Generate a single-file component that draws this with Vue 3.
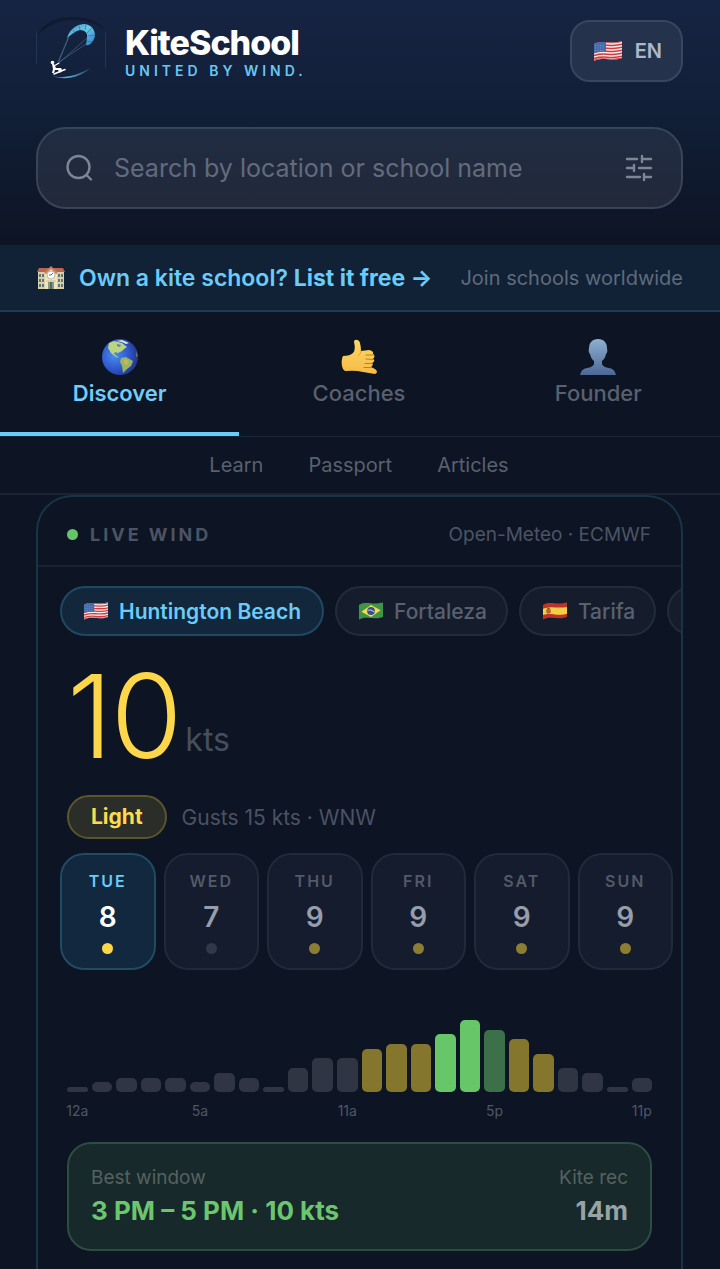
<template>
    <svg class="defs" aria-hidden="true">
        <defs>
            <clipPath id="wave">
                <path d="M1 4C10 -1 17 5 29 1V18C18 22 11 16 1 21Z" />
            </clipPath>
        </defs>
        <symbol id="flag-us" viewBox="0 0 30 22">
            <g clip-path="url(#wave)">
                <rect width="30" height="22" fill="#f4eeee" />
                <g fill="none" stroke="#cf3c40" stroke-width="1.5">
                    <path d="M0 4C10 -1 17 5 30 1" />
                    <path d="M0 7C10 2 17 8 30 4" />
                    <path d="M0 10C10 5 17 11 30 7" />
                    <path d="M0 13C10 8 17 14 30 10" />
                    <path d="M0 16C10 11 17 17 30 13" />
                    <path d="M0 19C10 14 17 20 30 16" />
                    <path d="M0 21C10 16 17 22 30 18" />
                </g>
                <path d="M0 0H13V12C9 11 4 12 0 14Z" fill="#466cac" />
                <path d="M2 5.5H12M2 8H12M2 10.5H12" stroke="#7f9ccc" stroke-width="0.8" stroke-dasharray="1 1.5" />
            </g>
        </symbol>
        <symbol id="flag-br" viewBox="0 0 30 22">
            <g clip-path="url(#wave)">
                <rect width="30" height="22" fill="#3f9447" />
                <path d="M4 12L15 4L26 10L15 18Z" fill="#f5dc4c" />
                <circle cx="15" cy="11" r="4.5" fill="#34508f" />
                <path d="M11 10Q15 9 19 12" fill="none" stroke="#dce5ef" stroke-width="1" />
            </g>
        </symbol>
        <symbol id="flag-es" viewBox="0 0 30 22">
            <g clip-path="url(#wave)">
                <rect width="30" height="22" fill="#bb3428" />
                <path d="M0 9C10 4 17 9 30 6V14C18 18 11 12 0 16Z" fill="#f6cd45" />
                <path d="M5 9H10V13Q7.5 15 5 13Z" fill="#b0652f" />
                <path d="M6 7H9V9H6Z" fill="#9a4a28" />
            </g>
        </symbol>
    </svg>

    <div class="page">
        <header class="header">
            <div class="top-row">
                <a href="#" class="brand">
                    <svg class="logo" viewBox="0 0 70 64" aria-hidden="true">
                        <defs>
                            <linearGradient id="kite" x1="0" y1="0" x2="1" y2="1">
                                <stop offset="0" stop-color="#2f8fc4" />
                                <stop offset="0.45" stop-color="#6bc9e6" />
                                <stop offset="1" stop-color="#2f7fd0" />
                            </linearGradient>
                            <linearGradient id="sea" x1="0" x2="1">
                                <stop offset="0" stop-color="#54b9de" stop-opacity="0.1" />
                                <stop offset="0.4" stop-color="#54b9de" />
                                <stop offset="1" stop-color="#54b9de" stop-opacity="0.2" />
                            </linearGradient>
                        </defs>
                        <path d="M1 19Q12 1 35 1T69 13Q54 3 35 4T1 19Z" fill="#101a31" />
                        <path d="M0.5 16V48M69.5 16V52" stroke="#223554" stroke-width="1" />
                        <path d="M32 22L22 46M52 21L24 46M33 21L23 45M50 28L23 46" stroke="#5680a0" stroke-width="0.5" />
                        <path d="M31 22C34 12 42 8 49 8C57 9 61 17 58 23C56 27 53 30 50 29L51 22C52 17 49 14 44 14C39 15 36 18 31 22Z" fill="url(#kite)" />
                        <path d="M37 14L39 17M43 10L44 14M50 8L49 14M56 12L51 17M59 19L52 20M56 26L51 25" stroke="#22649c" stroke-width="0.6" />
                        <circle cx="16.5" cy="46.5" r="1.8" fill="#fff" />
                        <path d="M16 48L18 48L20 52L25 52L26 54L24 57L22 54L19 54L18 57L16 57L17 53Z" fill="#fff" />
                        <path d="M18 50L23 47" stroke="#fff" stroke-width="1.2" stroke-linecap="round" />
                        <path d="M18 58L29 53.5" stroke="#fff" stroke-width="1.6" stroke-linecap="round" />
                        <path d="M14 59C28 64 41 59 55 52C44 61 28 66 14 59Z" fill="url(#sea)" />
                    </svg>
                    <span class="brand-text">
                        <strong>KiteSchool</strong>
                        <small>UNITED BY WIND.</small>
                    </span>
                </a>
                <button class="lang" aria-label="Language: EN">
                    <svg class="flag-lg" aria-hidden="true"><use href="#flag-us" /></svg>
                    EN
                </button>
            </div>

            <div class="search">
                <svg class="search-icon" viewBox="0 0 28 28" aria-hidden="true">
                    <circle cx="12.5" cy="13" r="11" />
                    <path d="M20.5 21L25 25.5" />
                </svg>
                <input v-model="query" type="text" aria-label="Search" placeholder="Search by location or school name" />
                <button class="filter" aria-label="Filters">
                    <svg viewBox="0 0 28 28" aria-hidden="true">
                        <path d="M2 5H12M17 5H26M17 2V8M2 14H8M14 14H26M9 11V17M2 23H15M19 23H26M19 20V26" />
                    </svg>
                </button>
            </div>
        </header>

        <div class="banner">
            <svg class="school" viewBox="0 0 28 24" aria-hidden="true">
                <path d="M1 5H27V23H1Z" fill="#d8d1a8" />
                <path d="M0 6L2 2H26L28 6Z" fill="#b9674f" />
                <path d="M8 7L14 1L20 7V23H8Z" fill="#ebe5c3" />
                <path d="M7 7L14 0L21 7L19 8L14 3L9 8Z" fill="#cf8068" />
                <circle cx="14" cy="9" r="4" fill="#fff" stroke="#a59d7d" stroke-width="0.7" />
                <path d="M14 9L16 7M14 9H12" stroke="#444" stroke-width="0.8" />
                <path d="M3 8V21M6 8V21M22 8V21M25 8V21" stroke="#566d76" stroke-width="1.8" stroke-dasharray="3 2" />
                <path d="M11 16H17V23H11Z" fill="#506c64" />
                <path d="M9 15H19M12 15V23M16 15V23" stroke="#c9c39a" stroke-width="1" />
            </svg>
            <a href="#" class="banner-link">Own a kite school? <b>List it free →</b></a>
            <span class="banner-note">Join schools worldwide</span>
        </div>

        <nav class="tabs">
            <button
                v-for="tab in tabs"
                :key="tab"
                :class="['tab', { active: tab === activeTab }]"
                @click="activeTab = tab"
            >
                <svg v-if="tab === 'Discover'" viewBox="0 0 36 36" aria-hidden="true">
                    <defs>
                        <radialGradient id="ocean" cx="0.35" cy="0.45" r="0.65">
                            <stop offset="0" stop-color="#4a8df0" />
                            <stop offset="0.6" stop-color="#2f58cc" />
                            <stop offset="1" stop-color="#25348c" />
                        </radialGradient>
                    </defs>
                    <circle cx="18" cy="18" r="18" fill="url(#ocean)" />
                    <path d="M7 4L12 2L20 4L25 8L22 10L20 12L16 14L13 13L12 15L17 19L14 18L9 14L6 9Z" fill="#bcd47c" />
                    <path d="M14 2L20 1L27 4L24 5L20 3Z" fill="#dbe8dc" />
                    <path d="M15 5L19 6L18 8L15 7Z" fill="#4a82d8" />
                    <path d="M19 19L24 18L31 22L29 27L25 30L21 34L20 27L18 23Z" fill="#9bb35d" />
                    <path d="M22 20L27 22L25 26L22 25Z" fill="#c2b766" />
                    <path d="M34 12L36 17L34 18Z" fill="#567b69" />
                </svg>
                <svg v-else-if="tab === 'Coaches'" viewBox="0 0 36 36" aria-hidden="true">
                    <defs>
                        <linearGradient id="skin" x1="0" y1="0" x2="0" y2="1">
                            <stop offset="0" stop-color="#ffd762" />
                            <stop offset="1" stop-color="#f5bb48" />
                        </linearGradient>
                    </defs>
                    <path d="M13 3C13 0 18 0 19 4Q20 8 20 12L28 11Q33 12 32 15Q35 17 32 20Q35 22 31 24Q33 26 30 28L34 30Q38 33 34 35L22 33Q14 31 5 32Q2 32 1 27Q0 20 2 17Q9 17 12 14Q15 11 13 3Z" fill="url(#skin)" />
                    <path d="M25 16L32 16M25 20L32 20.5M24 24.5L31 24.5M23 28.5L30 28.5" fill="none" stroke="#b98028" stroke-width="1.2" stroke-linecap="round" />
                    <path d="M20 12Q20 15 17 17" fill="none" stroke="#e0a53c" stroke-width="1" />
                </svg>
                <svg v-else viewBox="0 0 36 36" aria-hidden="true">
                    <defs>
                        <linearGradient id="bust" x1="0" y1="0" x2="0" y2="1">
                            <stop offset="0" stop-color="#8eb0cf" />
                            <stop offset="1" stop-color="#4d6796" />
                        </linearGradient>
                    </defs>
                    <path d="M18 0C24 0 27 4 27 9Q28 13 26 15Q25 20 22 22V25Q23 28 29 29Q35 30 36 36H0Q1 30 7 29Q13 28 14 25V22Q11 20 10 15Q8 13 9 9C9 4 12 0 18 0Z" fill="url(#bust)" />
                </svg>
                <span>{{ tab }}</span>
            </button>
        </nav>

        <nav class="subnav">
            <a v-for="link in links" :key="link" href="#">{{ link }}</a>
        </nav>

        <main class="card">
            <div class="card-head">
                <span class="live-dot"></span>
                <h2>LIVE WIND</h2>
                <span class="source">Open-Meteo · ECMWF</span>
            </div>

            <div class="spots">
                <button
                    v-for="spot in spots"
                    :key="spot.name"
                    :class="['spot', { active: spot.name === activeSpot }]"
                    @click="activeSpot = spot.name"
                >
                    <svg class="flag" aria-hidden="true"><use :href="spot.flag" /></svg>
                    {{ spot.name }}
                </button>
            </div>

            <div class="speed"><span class="value">10</span><span class="unit">kts</span></div>

            <div class="status">
                <span class="badge">Light</span>
                <span>Gusts 15 kts · WNW</span>
            </div>

            <div class="days">
                <button
                    v-for="day in days"
                    :key="day.name"
                    :class="['day', { active: day.name === activeDay }]"
                    @click="activeDay = day.name"
                >
                    <span class="day-name">{{ day.name }}</span>
                    <span class="day-value">{{ day.kts }}</span>
                    <span :class="['day-dot', { light: day.kts > 7 }]"></span>
                </button>
            </div>

            <div class="chart">
                <div v-for="(hour, i) in hours" :key="i" class="hour">
                    <div :class="['bar', hour.level]" :style="{ height: hour.height + 'px' }"></div>
                    <span class="hour-label">{{ hourLabels[i] }}</span>
                </div>
            </div>

            <div class="best">
                <div>
                    <p>Best window</p>
                    <strong>3 PM – 5 PM · 10 kts</strong>
                </div>
                <div class="rec">
                    <p>Kite rec</p>
                    <strong>14m</strong>
                </div>
            </div>
        </main>
    </div>
</template>

<script setup>
import { ref } from 'vue'

const query = ref('')

const tabs = ['Discover', 'Coaches', 'Founder']
const activeTab = ref('Discover')
const links = ['Learn', 'Passport', 'Articles']

const spots = [
    { name: 'Huntington Beach', flag: '#flag-us' },
    { name: 'Fortaleza', flag: '#flag-br' },
    { name: 'Tarifa', flag: '#flag-es' },
    { name: '', flag: '' }
]
const activeSpot = ref('Huntington Beach')

const days = [
    { name: 'TUE', kts: 8 },
    { name: 'WED', kts: 7 },
    { name: 'THU', kts: 9 },
    { name: 'FRI', kts: 9 },
    { name: 'SAT', kts: 9 },
    { name: 'SUN', kts: 9 }
]
const activeDay = ref('TUE')

const heights = [5, 10, 14, 14, 14, 10, 19, 14, 5, 24, 34, 34, 43, 48, 48, 58, 72, 62, 53, 38, 24, 19, 5, 14]
const levels = { 12: 'light', 13: 'light', 14: 'light', 15: 'peak', 16: 'peak', 17: 'good', 18: 'light', 19: 'light' }
const hours = heights.map((height, i) => ({ height, level: levels[i] }))
const hourLabels = { 0: '12a', 5: '5a', 11: '11a', 17: '5p', 23: '11p' }
</script>

<style>
body {
    background: #0d1424;
}
</style>

<style scoped>
.page {
    display: flex;
    flex-direction: column;
    min-height: 100vh;
    overflow: hidden;
    font-family: Inter, sans-serif;
    color: #59616f;
    background: #0d1424;
}

.defs {
    position: absolute;
    width: 0;
    height: 0;
}

.page * {
    box-sizing: border-box;
}

button {
    padding: 0;
    border: 0;
    font: inherit;
    color: inherit;
    background: none;
    cursor: pointer;
}

a {
    color: inherit;
    text-decoration: none;
}

.header {
    padding: 16px 37px 36px 36px;
    background: linear-gradient(#162443, #121f38 45%, #0d1424);
}

.top-row {
    display: flex;
    align-items: center;
    justify-content: space-between;
    height: 70px;
}

.brand {
    display: flex;
    align-items: flex-end;
    align-self: flex-start;
    gap: 19px;
}

.logo {
    width: 70px;
    height: 64px;
}

.brand-text {
    display: flex;
    flex-direction: column;
}

.brand-text strong {
    font-size: 34px;
    line-height: 38px;
    font-weight: 800;
    letter-spacing: -1px;
    color: #fff;
}

.brand-text small {
    font-size: 14px;
    line-height: 18px;
    font-weight: 600;
    letter-spacing: 4px;
    color: #67c7f2;
}

.lang {
    display: flex;
    align-items: center;
    gap: 12px;
    height: 62px;
    padding: 0 19px 0 21px;
    border: 2px solid #39465f;
    border-radius: 20px;
    font-size: 20px;
    font-weight: 600;
    color: #adb7ca;
    background: #25324b;
}

.flag-lg {
    width: 30px;
    height: 22px;
}

.search {
    display: flex;
    align-items: center;
    height: 82px;
    margin-top: 41px;
    padding: 0 28px;
    border: 2px solid #384558;
    border-radius: 30px;
    background: linear-gradient(#202c43, #22293a);
}

.search svg {
    width: 28px;
    height: 28px;
    fill: none;
    stroke: #7b8696;
    stroke-width: 2.4;
    stroke-linecap: round;
}

.search-icon {
    flex: none;
}

.filter svg {
    display: block;
}

.search input {
    flex: 1;
    min-width: 0;
    padding: 0 20px;
    border: 0;
    outline: 0;
    font: inherit;
    font-size: 25px;
    color: #fff;
    background: none;
}

.search input::placeholder {
    color: #626c7c;
    opacity: 1;
}

.banner {
    display: flex;
    align-items: center;
    height: 67px;
    padding: 0 37px;
    border-bottom: 2px solid #1d3c50;
    background: #112136;
}

.school {
    width: 28px;
    height: 24px;
}

.banner-link {
    margin-left: 14px;
    font-size: 23px;
    font-weight: 600;
    color: #6accf8;
}

.banner-link b {
    font-weight: 700;
}

.banner-note {
    margin-left: auto;
    font-size: 20px;
    color: #5f6b7c;
}

.tabs {
    display: flex;
    height: 125px;
    padding-right: 2px;
    border-bottom: 1px solid #1b2737;
}

.tab {
    display: flex;
    flex: 1;
    flex-direction: column;
    align-items: center;
    gap: 4px;
    padding-top: 27px;
    border-bottom: 4px solid transparent;
    font-size: 22px;
    line-height: 28px;
    font-weight: 500;
}

.tab svg {
    width: 36px;
    height: 36px;
}

.tab.active {
    border-color: #6accf8;
    font-weight: 600;
    color: #70cdf8;
}

.subnav {
    display: flex;
    align-items: center;
    justify-content: center;
    gap: 45px;
    height: 58px;
    padding-right: 2px;
    border-bottom: 2px solid #1a2433;
    font-size: 20px;
}

.card {
    flex: 1;
    margin: 0 37px 0 36px;
    padding-bottom: 18px;
    border: 2px solid #1b3348;
    border-bottom: 0;
    border-radius: 36px 36px 0 0;
    overflow: hidden;
}

.card-head {
    display: flex;
    align-items: center;
    height: 70px;
    padding: 6px 30px 0 29px;
    border-bottom: 2px solid #182334;
}

.live-dot {
    width: 11px;
    height: 11px;
    margin-right: 12px;
    border-radius: 50%;
    background: #66c468;
}

.card-head h2 {
    margin: 0;
    font-size: 18px;
    font-weight: 700;
    letter-spacing: 3px;
    color: #4c5463;
}

.source {
    margin-left: auto;
    font-size: 19px;
    color: #4c5463;
}

.spots {
    display: flex;
    gap: 11px;
    margin-top: 19px;
    padding-left: 22px;
    overflow: hidden;
}

.spot {
    display: flex;
    flex: none;
    align-items: center;
    gap: 10px;
    height: 50px;
    padding: 0 19px 0 21px;
    border: 2px solid #222b3a;
    border-radius: 25px;
    font-size: 21px;
    font-weight: 500;
    background: #151d2d;
}

.spot.active {
    padding-right: 21px;
    border-color: #1f4960;
    font-weight: 600;
    color: #6accf8;
    background: #12273c;
}

.flag {
    width: 26px;
    height: 20px;
}

.speed {
    display: flex;
    align-items: flex-end;
    margin-top: 20px;
    padding-left: 29px;
}

.value {
    font-size: 116px;
    line-height: 120px;
    font-weight: 300;
    letter-spacing: -2px;
    color: #fdd74b;
}

.unit {
    padding: 0 0 16px 5px;
    font-size: 32px;
    line-height: 40px;
    color: #464e5d;
}

.status {
    display: flex;
    align-items: center;
    gap: 15px;
    margin-top: 19px;
    padding-left: 29px;
    font-size: 21px;
    color: #4b5362;
}

.badge {
    height: 44px;
    padding: 0 22px;
    border: 2px solid #5b562c;
    border-radius: 22px;
    font-weight: 700;
    line-height: 40px;
    color: #fddb50;
    background: #2b2d29;
}

.days {
    display: flex;
    gap: 8px;
    margin-top: 14px;
    padding: 0 8px 0 22px;
}

.day {
    display: flex;
    flex: 1;
    flex-direction: column;
    align-items: center;
    height: 117px;
    padding-top: 16px;
    border: 2px solid #202a39;
    border-radius: 24px;
    background: #151c2d;
}

.day.active {
    border-color: #1f4b63;
    background: #12283e;
}

.day-name {
    font-size: 16px;
    line-height: 20px;
    font-weight: 600;
    letter-spacing: 2px;
    color: #525a69;
}

.day-value {
    margin: 9px 0;
    font-size: 28px;
    line-height: 34px;
    font-weight: 600;
    color: #969dab;
}

.day-dot {
    width: 11px;
    height: 11px;
    border-radius: 50%;
    background: #323946;
}

.day-dot.light {
    background: #8b7d32;
}

.day.active .day-name {
    color: #6accf8;
}

.day.active .day-value {
    color: #fff;
}

.day.active .day-dot {
    background: #fdd74b;
}

.chart {
    display: flex;
    align-items: flex-end;
    gap: 4px;
    height: 150px;
    padding: 0 29px;
}

.hour {
    display: flex;
    flex: 1;
    flex-direction: column;
    align-items: center;
    width: 0;
}

.bar {
    width: 100%;
    border-radius: 5px;
    background: #2f3542;
}

.bar.light {
    background: #84762c;
}

.bar.good {
    background: #3b7048;
}

.bar.peak {
    background: #67c668;
}

.hour-label {
    height: 18px;
    margin-top: 10px;
    font-size: 14px;
    line-height: 18px;
    color: #4f5766;
}

.best {
    display: flex;
    justify-content: space-between;
    margin: 22px 29px 0;
    padding: 22px;
    border: 2px solid #2c4d40;
    border-radius: 24px;
    background: #18292b;
}

.best p {
    margin: 0 0 4px;
    font-size: 19px;
    line-height: 24px;
    color: #55625f;
}

.best strong {
    display: block;
    font-size: 26px;
    line-height: 33px;
    font-weight: 700;
    color: #6bc66e;
}

.rec {
    text-align: right;
}

.best .rec strong {
    color: #98a3a5;
}
</style>
